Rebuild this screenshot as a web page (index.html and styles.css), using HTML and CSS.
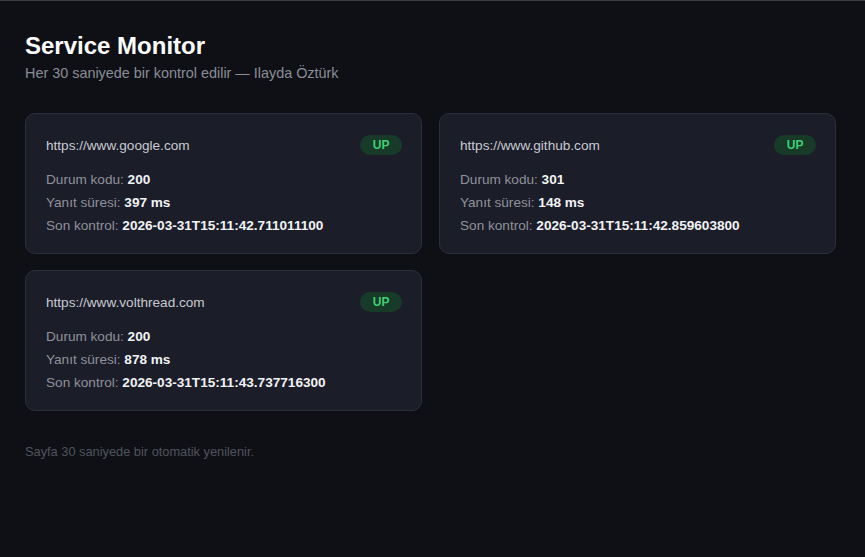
FILE: index.html
```html
<!DOCTYPE html>
<html lang="tr">
<head>
<meta charset="utf-8">
<title>Service Monitor</title>
<link rel="stylesheet" href="styles.css">
</head>
<body>
<div class="page">
  <h1 class="title">Service Monitor</h1>
  <p class="subtitle">Her 30 saniyede bir kontrol edilir — Ilayda Öztürk</p>
  <div class="grid">
    <div class="card">
      <div class="card-head">
        <span class="url">https://www.google.com</span>
        <span class="badge">UP</span>
      </div>
      <div class="row">Durum kodu: <b>200</b></div>
      <div class="row">Yanıt süresi: <b>397 ms</b></div>
      <div class="row">Son kontrol: <b>2026-03-31T15:11:42.711011100</b></div>
    </div>
    <div class="card">
      <div class="card-head">
        <span class="url">https://www.github.com</span>
        <span class="badge">UP</span>
      </div>
      <div class="row">Durum kodu: <b>301</b></div>
      <div class="row">Yanıt süresi: <b>148 ms</b></div>
      <div class="row">Son kontrol: <b>2026-03-31T15:11:42.859603800</b></div>
    </div>
    <div class="card">
      <div class="card-head">
        <span class="url">https://www.volthread.com</span>
        <span class="badge">UP</span>
      </div>
      <div class="row">Durum kodu: <b>200</b></div>
      <div class="row">Yanıt süresi: <b>878 ms</b></div>
      <div class="row">Son kontrol: <b>2026-03-31T15:11:43.737716300</b></div>
    </div>
  </div>
  <p class="footer">Sayfa 30 saniyede bir otomatik yenilenir.</p>
</div>
</body>
</html>
```
FILE: styles.css
```css
html {
  background: #0f1016;
  border-top: 1px solid #3b3c42;
  min-height: 100%;
}
body {
  margin: 0;
  background: #0f1016;
  font-family: "Liberation Sans", Arial, sans-serif;
  color: #e6e7ea;
}
.page {
  padding: 31px 25px;
}
.title {
  margin: 0;
  font-size: 24px;
  line-height: 28px;
  font-weight: bold;
  color: #ffffff;
}
.subtitle {
  margin: 3px 0 0;
  font-size: 14.4px;
  line-height: 20px;
  color: #8a8d96;
}
.grid {
  margin-top: 30px;
  width: 811px;
  display: grid;
  grid-template-columns: repeat(2, 1fr);
  gap: 16px 17px;
}
.card {
  background: #1b1d29;
  border: 1px solid #2b2e3b;
  border-radius: 10px;
  padding: 20px 19px 16px 20px;
}
.card-head {
  display: flex;
  justify-content: space-between;
  align-items: center;
  height: 22px;
  margin-bottom: 12px;
}
.url {
  font-size: 13.6px;
  color: #c9cbd1;
}
.badge {
  background: #173a29;
  color: #3fcf72;
  font-size: 12px;
  font-weight: bold;
  line-height: 20px;
  padding: 0 12.5px;
  border-radius: 10px;
}
.row {
  font-size: 13.6px;
  line-height: 23px;
  color: #8f929b;
}
.row b {
  color: #f2f3f5;
  font-weight: bold;
}
.footer {
  margin: 33px 0 0;
  font-size: 12.8px;
  line-height: 16px;
  color: #50535d;
}
```
